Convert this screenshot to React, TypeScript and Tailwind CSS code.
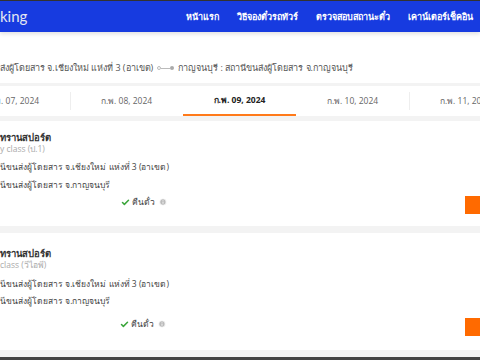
import { Check, Info } from 'lucide-react'

const NAV = ['หน้าแรก', 'วิธีจองตั๋วรถทัวร์', 'ตรวจสอบสถานะตั๋ว', 'เคาน์เตอร์เช็คอิน']

const DATES = [
  { label: 'ก.พ. 07, 2024', active: false },
  { label: 'ก.พ. 08, 2024', active: false },
  { label: 'ก.พ. 09, 2024', active: true },
  { label: 'ก.พ. 10, 2024', active: false },
  { label: 'ก.พ. 11, 2024', active: false },
]

// spacing differs a little between the two cards in the screenshot
type Trip = {
  company: string
  seatClass: string
  from: string
  to: string
  refundIndent: string
  pad: string
  fromGap: string
  toGap: string
  rowGap: string
}

const TRIPS: Trip[] = [
  {
    company: 'ทรานสปอร์ต',
    seatClass: 'y class (ป.1)',
    from: 'นีขนส่งผู้โดยสาร จ.เชียงใหม่ แห่งที่ 3 (อาเขต)',
    to: 'นีขนส่งผู้โดยสาร จ.กาญจนบุรี',
    refundIndent: 'pl-[121px]',
    pad: 'pt-[11px] pb-[12px]',
    fromGap: 'mt-[7px]',
    toGap: 'mt-[6px]',
    rowGap: 'mt-[5px]',
  },
  {
    company: 'ทรานสปอร์ต',
    seatClass: ' class (วีไอพี)',
    from: 'นีขนส่งผู้โดยสาร จ.เชียงใหม่ แห่งที่ 3 (อาเขต)',
    to: 'นีขนส่งผู้โดยสาร จ.กาญจนบุรี',
    refundIndent: 'pl-[120px]',
    pad: 'pt-[15px] pb-[14px]',
    fromGap: 'mt-[8px]',
    toGap: 'mt-[5px]',
    rowGap: 'mt-[11px]',
  },
]

function TripCard({ trip }: { trip: Trip }) {
  return (
    <div className={`shrink-0 bg-white ${trip.pad}`}>
      <p className="text-[9.5px] leading-[12px] font-bold text-[#333]">{trip.company}</p>
      <p className="text-[8.5px] leading-[10px] text-[#aaa]">{trip.seatClass}</p>
      <p className={`${trip.fromGap} text-[8.5px] leading-[12px] text-[#444]`}>{trip.from}</p>
      <p className={`${trip.toGap} text-[8.5px] leading-[12px] text-[#444]`}>{trip.to}</p>
      <div className={`${trip.rowGap} flex items-start justify-between`}>
        <div className={`flex items-center gap-[2px] ${trip.refundIndent} text-[8.5px] leading-[12px] text-[#444]`}>
          <Check className="w-[9px] h-[9px] text-[#3aa53a]" strokeWidth={4} />
          <span>คืนตั๋ว</span>
          <Info className="ml-[2px] w-[8px] h-[8px] text-white fill-[#bbb]" strokeWidth={2.5} />
        </div>
        <div className="w-[15px] h-[18px] bg-[#ff6a00]" />
      </div>
    </div>
  )
}

export default function App() {
  return (
    <div
      className="w-[480px] h-[360px] overflow-hidden bg-[#f3f3f3] flex flex-col"
      style={{ fontFamily: '"Open Sans", "Noto Sans", sans-serif' }}
    >
      {/* Header */}
      <div className="shrink-0 h-[1px] bg-[#333]" />
      <div className="shrink-0 h-[31px] bg-[#173be0] flex items-center justify-between pr-[7px] shadow-[0_2px_4px_rgba(0,0,0,0.12)] relative z-10">
        <span className="text-[15px] text-[#e3e6f2]" style={{ fontFamily: 'Lato, sans-serif' }}>
          king
        </span>
        <nav className="flex items-center gap-[18px]">
          {NAV.map((item) => (
            <span key={item} className="text-[9px] font-semibold text-white">
              {item}
            </span>
          ))}
        </nav>
      </div>

      {/* Route */}
      <div className="shrink-0 h-[51px] bg-white flex items-center pt-[21px] text-[9px] text-[#555]">
        <span>ส่งผู้โดยสาร จ.เชียงใหม่ แห่งที่ 3 (อาเขต)</span>
        <div className="mx-[4px] flex items-center">
          <span className="w-[4px] h-[4px] rounded-full border border-[#bbb]" />
          <span className="w-[9px] h-px bg-[#bbb]" />
          <span className="w-[4px] h-[4px] rounded-full bg-[#aaa]" />
        </div>
        <span>กาญจนบุรี : สถานีขนส่งผู้โดยสาร จ.กาญจนบุรี</span>
      </div>

      {/* Date tabs */}
      <div className="shrink-0 mt-[3px] h-[30px] bg-white flex ml-[-43px]">
        {DATES.map((d, i) => (
          <div
            key={d.label}
            className={`relative w-[113px] shrink-0 flex items-center justify-center text-[8.5px] ${
              d.active ? 'font-bold text-[#222] border-b-2 border-[#ff7a1a]' : 'text-[#666]'
            }`}
          >
            {i > 0 && !d.active && !DATES[i - 1].active && (
              <span className="absolute left-0 top-[6px] bottom-[6px] w-px bg-[#eee]" />
            )}
            {d.label}
          </div>
        ))}
      </div>

      {/* Trips */}
      <div className="shrink-0 mt-[5px] flex flex-col gap-[7px]">
        {TRIPS.map((t, i) => (
          <TripCard key={i} trip={t} />
        ))}
      </div>
      <div className="mt-auto shrink-0 h-[3px] bg-[#444]" />
    </div>
  )
}
